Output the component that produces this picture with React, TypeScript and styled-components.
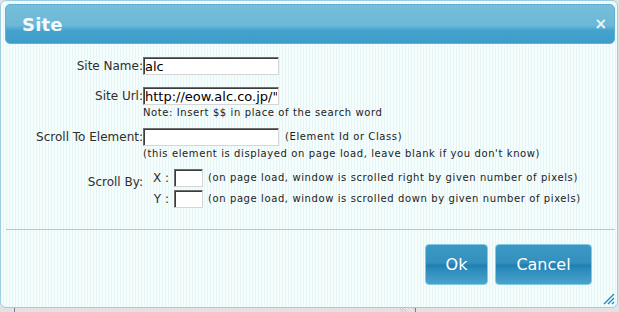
import React from "react";
import styled, { createGlobalStyle } from "styled-components";

const GlobalStyle = createGlobalStyle`
  html, body { margin: 0; padding: 0; background: #e2e2e2; }
  body { font-family: "DejaVu Sans", Verdana, sans-serif; }
  #root { width: 619px; height: 312px; overflow: hidden; }
`;

const Page = styled.div`
  width: 619px;
  height: 312px;
  background: #e2e2e2;
  display: flex;
  flex-direction: column;
`;

const Dialog = styled.div`
  position: relative;
  box-sizing: border-box;
  width: 618px;
  height: 308px;
  flex: none;
  border: 1px solid #9ccde0;
  border-radius: 6px;
  background-color: #f3fbfb;
  background-image: repeating-linear-gradient(
    90deg,
    #f5fcfc 0px,
    #f5fcfc 2px,
    #e6f5f6 2px,
    #e6f5f6 3px
  );
  display: flex;
  flex-direction: column;
`;

const Header = styled.div`
  margin: 3px 2px 0 4px;
  height: 40px;
  box-sizing: border-box;
  border: 1px solid #5fb0d4;
  border-radius: 5px;
  background: linear-gradient(
    180deg,
    #76bedb 0%,
    #6cb8d6 54%,
    #5aaed3 60%,
    #44a3cd 67%,
    #3d9dc9 100%
  );
  display: flex;
  align-items: center;
  justify-content: space-between;
  padding: 0 7px 0 16px;
`;

const Title = styled.span`
  font-family: "DejaVu Sans", Verdana, sans-serif;
  font-weight: bold;
  font-size: 18px;
  color: #f4fafd;
  letter-spacing: 0.2px;
`;

const Close = styled.span`
  font-family: "DejaVu Sans", Verdana, sans-serif;
  font-weight: bold;
  font-size: 15px;
  color: #e9f5fa;
  line-height: 1;
`;

const Form = styled.div`
  display: flex;
  flex-direction: column;
  padding-top: 13px;
`;

const Field = styled.div<{ $top: number }>`
  display: grid;
  grid-template-columns: 142px auto;
  align-items: center;
  margin-top: ${(p) => p.$top}px;
`;

const Label = styled.label<{ $shift?: number }>`
  text-align: right;
  font-size: 12px;
  color: #2e2e2e;
  white-space: nowrap;
  align-self: ${(p) => (p.$shift ? "start" : "center")};
  padding-top: ${(p) => p.$shift ?? 0}px;
`;

const Line = styled.div`
  display: flex;
  align-items: center;
`;

const TextBox = styled.input<{ $w: number }>`
  box-sizing: border-box;
  width: ${(p) => p.$w}px;
  height: 18px;
  margin: 0;
  padding: 0 1px;
  border: 1px solid;
  border-color: #6e6e6e #d6d6d6 #d6d6d6 #6e6e6e;
  box-shadow: inset 1px 1px 0 #3c3c3c;
  background: #fff;
  font-family: "DejaVu Sans", Verdana, sans-serif;
  font-size: 13px;
  color: #000;
  outline: none;
`;

const Hint = styled.span<{ $gap?: number }>`
  font-size: 10px;
  letter-spacing: 0.6px;
  color: #222;
  margin-left: ${(p) => p.$gap ?? 0}px;
  white-space: nowrap;
  line-height: 14px;
`;

const SubNote = styled.div<{ $top?: number }>`
  margin-left: 142px;
  margin-top: ${(p) => p.$top ?? 0}px;
  font-size: 10px;
  letter-spacing: 0.6px;
  color: #222;
  line-height: 14px;
  white-space: nowrap;
`;

const AxisGrid = styled.div`
  display: grid;
  grid-template-columns: 31px auto;
  row-gap: 3px;
  align-items: center;
`;

const Axis = styled.span`
  text-align: right;
  padding-right: 5px;
  font-size: 12px;
  color: #2e2e2e;
`;

const Separator = styled.div`
  margin: 21px 2px 0 5px;
  height: 1px;
  background: #9fd0e2;
`;

const Footer = styled.div`
  display: flex;
  justify-content: flex-end;
  gap: 7px;
  padding: 14px 25px 0 0;
`;

const Button = styled.button<{ $w: number }>`
  box-sizing: border-box;
  width: ${(p) => p.$w}px;
  height: 41px;
  margin: 0;
  padding: 0;
  border: 1px solid #82c9e6;
  border-radius: 4px;
  background: linear-gradient(
    180deg,
    #3c98c3 0%,
    #348fbd 46%,
    #1f7fb1 52%,
    #2c8abb 62%,
    #4aa3cc 100%
  );
  font-family: "DejaVu Sans", Verdana, sans-serif;
  font-size: 16px;
  color: #fff;
  cursor: pointer;
`;

const Grip = styled.svg`
  position: absolute;
  right: 2px;
  bottom: 2px;
`;

const Strip = styled.div`
  display: flex;
  height: 4px;
  flex: none;
`;

const Space = styled.div<{ $w: number }>`
  width: ${(p) => p.$w}px;
`;

const Rule = styled.div`
  width: 1px;
  background: #71829c;
`;

const Patch = styled.div`
  width: 15px;
  background: repeating-linear-gradient(45deg, #d0d0d0 0 1px, #ececec 1px 2px);
`;

export default function App() {
  return (
    <Page>
      <GlobalStyle />
      <Dialog>
        <Header>
          <Title>Site</Title>
          <Close>×</Close>
        </Header>
        <Form>
          <Field $top={0}>
            <Label>Site Name:</Label>
            <Line>
              <TextBox $w={136} defaultValue="alc" />
            </Line>
          </Field>
          <Field $top={12}>
            <Label>Site Url:</Label>
            <Line>
              <TextBox $w={136} defaultValue={'http://eow.alc.co.jp/"$$"/UTF-8/'} />
            </Line>
          </Field>
          <SubNote $top={1}>Note: Insert $$ in place of the search word</SubNote>
          <Field $top={8}>
            <Label>Scroll To Element:</Label>
            <Line>
              <TextBox $w={136} defaultValue="" />
              <Hint $gap={6}>(Element Id or Class)</Hint>
            </Line>
          </Field>
          <SubNote $top={1}>
            (this element is displayed on page load, leave blank if you don't know)
          </SubNote>
          <Field $top={8}>
            <Label $shift={6}>Scroll By:</Label>
            <AxisGrid>
              <Axis>X :</Axis>
              <Line>
                <TextBox $w={29} defaultValue="" />
                <Hint $gap={5}>
                  (on page load, window is scrolled right by given number of pixels)
                </Hint>
              </Line>
              <Axis>Y :</Axis>
              <Line>
                <TextBox $w={29} defaultValue="" />
                <Hint $gap={5}>
                  (on page load, window is scrolled down by given number of pixels)
                </Hint>
              </Line>
            </AxisGrid>
          </Field>
        </Form>
        <Separator />
        <Footer>
          <Button $w={63}>Ok</Button>
          <Button $w={97}>Cancel</Button>
        </Footer>
        <Grip width="12" height="12" viewBox="0 0 12 12">
          <g stroke="#1f86bd" strokeWidth="1.2">
            <line x1="1" y1="11" x2="11" y2="1" />
            <line x1="5" y1="11" x2="11" y2="5" />
            <line x1="9" y1="11" x2="11" y2="9" />
          </g>
        </Grip>
      </Dialog>
      <Strip>
        <Space $w={14} />
        <Rule />
        <Space $w={385} />
        <Patch />
        <Rule />
      </Strip>
    </Page>
  );
}
